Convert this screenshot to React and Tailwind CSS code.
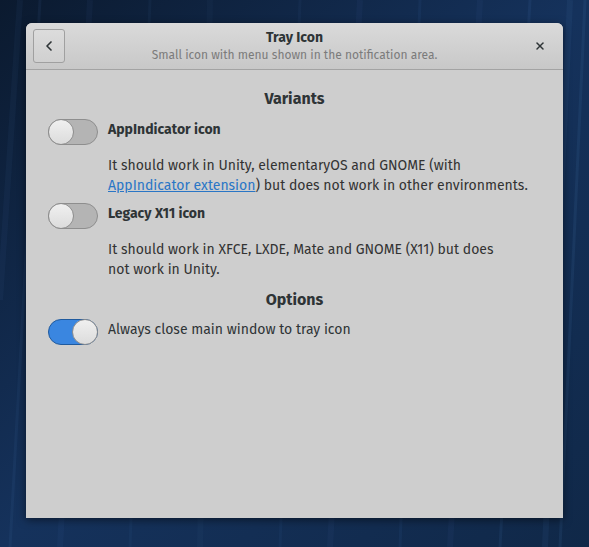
import { ChevronLeft, X } from "lucide-react";

function Wallpaper() {
  const streaks = [
    [40, 0, 10, 547, 0.08], [90, 0, 60, 547, 0.05], [150, 0, 130, 547, 0.06],
    [210, 0, 200, 547, 0.04], [300, 0, 280, 547, 0.06], [360, 0, 330, 547, 0.05],
    [420, 0, 400, 547, 0.07], [480, 0, 450, 547, 0.05], [530, 0, 500, 547, 0.09],
    [570, 0, 545, 547, 0.08], [585, 0, 560, 547, 0.1], [20, 0, 0, 300, 0.06],
  ];
  return (
    <svg className="absolute inset-0 h-full w-full" viewBox="0 0 589 547" preserveAspectRatio="none">
      <defs>
        <linearGradient id="wp" x1="0" y1="0" x2="1" y2="1">
          <stop offset="0" stopColor="#0b1a2f" />
          <stop offset="0.5" stopColor="#15325c" />
          <stop offset="1" stopColor="#102848" />
        </linearGradient>
      </defs>
      <rect width="589" height="547" fill="url(#wp)" />
      {streaks.map(([x1, y1, x2, y2, o], i) => (
        <line key={i} x1={x1} y1={y1} x2={x2} y2={y2} stroke="#5b8fd0" strokeOpacity={o} strokeWidth={i % 2 ? 6 : 3} />
      ))}
    </svg>
  );
}

function Toggle({ on }) {
  return (
    <div
      className={
        on
          ? "flex h-[26px] w-[50px] shrink-0 items-center justify-end rounded-full border border-[#1f5a9e] bg-[#3a86e0]"
          : "flex h-[26px] w-[50px] shrink-0 items-center justify-start rounded-full border border-[#8e8e8e] bg-[#b4b4b4]"
      }
    >
      <div className="h-[26px] w-[26px] -m-px rounded-full border border-[#8e8e8e] bg-gradient-to-b from-[#f0f0f0] to-[#dcdcdc]" />
    </div>
  );
}

function Row({ on, label, bold, children }) {
  return (
    <div className="flex items-start gap-[10px]">
      <Toggle on={on} />
      <div className="flex flex-col pt-[1px]">
        <div className={bold ? "text-[14px] font-bold leading-[20px] text-[#2e3436]" : "text-[14px] leading-[20px] text-[#2e3436]"}>
          {label}
        </div>
        {children}
      </div>
    </div>
  );
}

export default function App() {
  return (
    <div
      className="relative flex h-[547px] w-[589px] overflow-hidden pl-[26px] pt-[23px] text-[#2e3436]"
      style={{ fontFamily: '"Fira Sans", "Noto Sans", "Open Sans", sans-serif' }}
    >
      <Wallpaper />
      <div className="relative flex h-[495px] w-[537px] flex-col overflow-hidden rounded-t-[6px] bg-[#cecece] shadow-[0_2px_8px_rgba(0,0,0,0.5)]">
        <div className="flex h-[47px] shrink-0 items-center border-b border-[#a3a3a3] bg-gradient-to-b from-[#dadada] to-[#c8c8c8] px-[7px]">
          <div className="flex h-[34px] w-[32px] items-center justify-center rounded-[3px] border border-[#a0a0a0] bg-gradient-to-b from-[#dcdcdc] to-[#d0d0d0]">
            <ChevronLeft size={16} strokeWidth={2.5} className="text-[#2e3436]" />
          </div>
          <div className="flex flex-1 flex-col items-center">
            <div className="text-[14px] font-bold leading-[18px] text-[#2e3436]">Tray Icon</div>
            <div className="text-[12px] leading-[16px] text-[#7b7b7b]">Small icon with menu shown in the notification area.</div>
          </div>
          <div className="flex h-[34px] w-[32px] items-center justify-center">
            <X size={12} strokeWidth={3} className="text-[#2e3436]" />
          </div>
        </div>
        <div className="flex flex-col px-[22px] pt-[18px]">
          <div className="text-center text-[16px] font-bold leading-[22px]">Variants</div>
          <div className="mt-[9px]">
            <Row on={false} label="AppIndicator icon" bold>
              <div className="mt-[16px] text-[14px] leading-[20px] text-[#333]">
                It should work in Unity, elementaryOS and GNOME (with
                <br />
                <span className="text-[#2a76c6] underline">AppIndicator extension</span>) but does not work in other environments.
              </div>
            </Row>
          </div>
          <div className="mt-[7px]">
            <Row on={false} label="Legacy X11 icon" bold>
              <div className="mt-[16px] text-[14px] leading-[20px] text-[#333]">
                It should work in XFCE, LXDE, Mate and GNOME (X11) but does
                <br />
                not work in Unity.
              </div>
            </Row>
          </div>
          <div className="mt-[9px] text-center text-[16px] font-bold leading-[22px]">Options</div>
          <div className="mt-[8px]">
            <Row on label="Always close main window to tray icon" />
          </div>
        </div>
      </div>
    </div>
  );
}
